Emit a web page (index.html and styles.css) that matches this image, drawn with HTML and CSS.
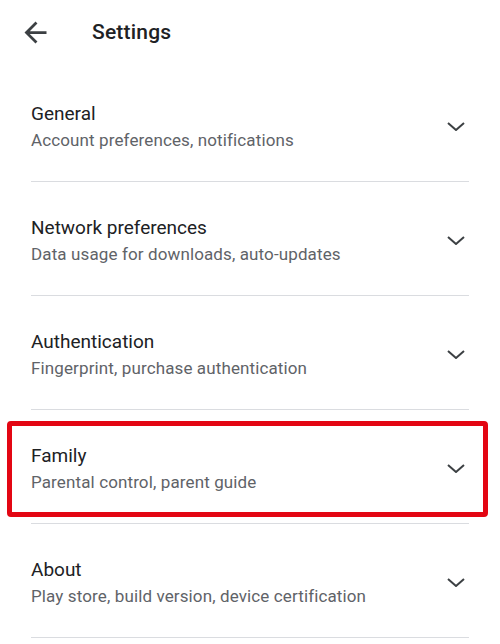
FILE: index.html
```html
<!DOCTYPE html>
<html lang="en">
<head>
<meta charset="UTF-8">
<meta name="viewport" content="width=device-width, initial-scale=1.0"/>
<title>Settings</title>
<link rel="stylesheet" href="styles.css">
</head>
<body>
<header class="top-bar">
    <button class="back-btn" aria-label="Back">
        <svg viewBox="0 0 24 24" width="33" height="33"><path d="M20 11H7.83l5.59-5.59L12 4l-8 8 8 8 1.41-1.41L7.83 13H20v-2z"/></svg>
    </button>
    <h1>Settings</h1>
</header>
<ul class="settings-list">
    <li class="setting">
        <div class="setting-text">
            <div class="setting-title">General</div>
            <div class="setting-sub">Account preferences, notifications</div>
        </div>
        <svg class="chevron" viewBox="0 0 18 9" width="18" height="9"><path d="M1 1l8 7 8-7"/></svg>
    </li>
    <li class="setting">
        <div class="setting-text">
            <div class="setting-title">Network preferences</div>
            <div class="setting-sub">Data usage for downloads, auto-updates</div>
        </div>
        <svg class="chevron" viewBox="0 0 18 9" width="18" height="9"><path d="M1 1l8 7 8-7"/></svg>
    </li>
    <li class="setting">
        <div class="setting-text">
            <div class="setting-title">Authentication</div>
            <div class="setting-sub">Fingerprint, purchase authentication</div>
        </div>
        <svg class="chevron" viewBox="0 0 18 9" width="18" height="9"><path d="M1 1l8 7 8-7"/></svg>
    </li>
    <li class="setting highlighted">
        <div class="setting-text">
            <div class="setting-title">Family</div>
            <div class="setting-sub">Parental control, parent guide</div>
        </div>
        <svg class="chevron" viewBox="0 0 18 9" width="18" height="9"><path d="M1 1l8 7 8-7"/></svg>
    </li>
    <li class="setting">
        <div class="setting-text">
            <div class="setting-title">About</div>
            <div class="setting-sub">Play store, build version, device certification</div>
        </div>
        <svg class="chevron" viewBox="0 0 18 9" width="18" height="9"><path d="M1 1l8 7 8-7"/></svg>
    </li>
</ul>
</body>
</html>
```

FILE: styles.css
```css
* { margin:0; padding:0; box-sizing:border-box; }
body {
    font-family: Roboto, 'Noto Sans', sans-serif;
    background: #fff;
    color: #202124;
    width: 500px;
    height: 644px;
    overflow: hidden;
}
.top-bar {
    display: flex;
    align-items: center;
    height: 64px;
    padding-left: 19px;
}
.back-btn {
    border: none;
    background: none;
    width: 33px;
    height: 33px;
    display: flex;
}
.back-btn svg { fill: #3c4043; }
.top-bar h1 {
    font-size: 21px;
    font-weight: 500;
    margin-left: 40px;
    color: #202124;
    letter-spacing: 0.2px;
}
.settings-list {
    list-style: none;
    margin-top: 4px;
}
.setting {
    position: relative;
    display: flex;
    align-items: center;
    margin: 0 31px 0 31px;
    padding: 32px 4px 28px 0;
    border-bottom: 1px solid #dadce0;
    height: 114px;
}
.setting-text { flex: 1; }
.setting-title {
    font-size: 19px;
    line-height: 27px;
    color: #202124;
}
.setting-sub {
    font-size: 17px;
    line-height: 26px;
    color: #5f6368;
    letter-spacing: 0.12px;
}
.chevron {
    fill: none;
    stroke: #3c4043;
    stroke-width: 2;
}
.highlighted::after {
    content: '';
    position: absolute;
    left: -24px;
    right: -19px;
    top: 11px;
    bottom: 6px;
    border: 5px solid #e30613;
    border-radius: 4px;
}
```
